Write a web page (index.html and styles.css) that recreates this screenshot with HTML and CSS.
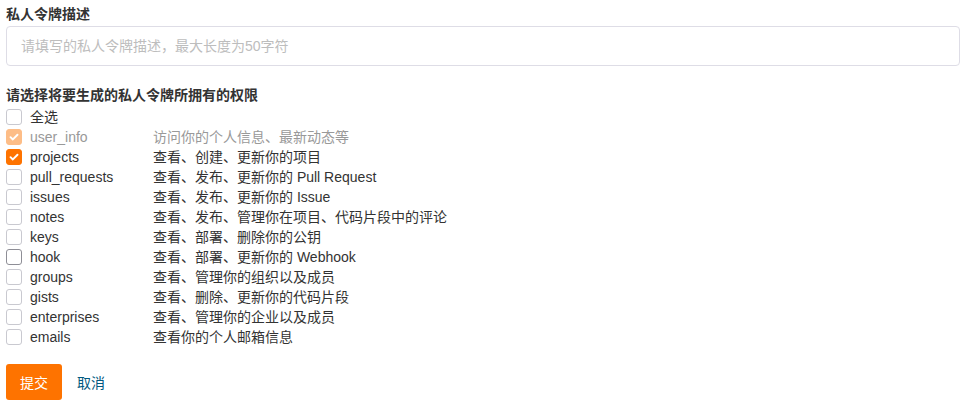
FILE: index.html
```html
<!DOCTYPE html>
<html lang="zh-CN">
<head>
    <meta charset="UTF-8">
    <title>私人令牌</title>
    <link rel="stylesheet" href="styles.css">
</head>
<body>
    <form class="token-form">
        <div class="field-title">私人令牌描述</div>
        <input class="desc-input" type="text" placeholder="请填写的私人令牌描述，最大长度为50字符">

        <div class="field-title scope-title">请选择将要生成的私人令牌所拥有的权限</div>
        <div class="scope-list">
            <div class="scope-row">
                <span class="box"></span>
                <span class="scope-name">全选</span>
            </div>
            <div class="scope-row disabled">
                <span class="box checked"><svg viewBox="0 0 16 16"><path d="M4 8.2l2.7 2.6L12 5.4" /></svg></span>
                <span class="scope-name">user_info</span>
                <span class="scope-desc">访问你的个人信息、最新动态等</span>
            </div>
            <div class="scope-row">
                <span class="box checked"><svg viewBox="0 0 16 16"><path d="M4 8.2l2.7 2.6L12 5.4" /></svg></span>
                <span class="scope-name">projects</span>
                <span class="scope-desc">查看、创建、更新你的项目</span>
            </div>
            <div class="scope-row">
                <span class="box"></span>
                <span class="scope-name">pull_requests</span>
                <span class="scope-desc">查看、发布、更新你的 Pull Request</span>
            </div>
            <div class="scope-row">
                <span class="box"></span>
                <span class="scope-name">issues</span>
                <span class="scope-desc">查看、发布、更新你的 Issue</span>
            </div>
            <div class="scope-row">
                <span class="box"></span>
                <span class="scope-name">notes</span>
                <span class="scope-desc">查看、发布、管理你在项目、代码片段中的评论</span>
            </div>
            <div class="scope-row">
                <span class="box"></span>
                <span class="scope-name">keys</span>
                <span class="scope-desc">查看、部署、删除你的公钥</span>
            </div>
            <div class="scope-row">
                <span class="box hover"></span>
                <span class="scope-name">hook</span>
                <span class="scope-desc">查看、部署、更新你的 Webhook</span>
            </div>
            <div class="scope-row">
                <span class="box"></span>
                <span class="scope-name">groups</span>
                <span class="scope-desc">查看、管理你的组织以及成员</span>
            </div>
            <div class="scope-row">
                <span class="box"></span>
                <span class="scope-name">gists</span>
                <span class="scope-desc">查看、删除、更新你的代码片段</span>
            </div>
            <div class="scope-row">
                <span class="box"></span>
                <span class="scope-name">enterprises</span>
                <span class="scope-desc">查看、管理你的企业以及成员</span>
            </div>
            <div class="scope-row">
                <span class="box"></span>
                <span class="scope-name">emails</span>
                <span class="scope-desc">查看你的个人邮箱信息</span>
            </div>
        </div>

        <div class="actions">
            <button class="submit-btn" type="button">提交</button>
            <a class="cancel-link" href="#">取消</a>
        </div>
    </form>
</body>
</html>
```

FILE: styles.css
```css
body {
    margin: 0;
    padding: 4px 6px;
    font-family: "Liberation Sans", "Noto Sans CJK SC", sans-serif;
    font-size: 14px;
    color: #333;
    background-color: #fff;
}
.token-form {
    width: 954px;
}
.field-title {
    font-weight: bold;
    line-height: 20px;
    color: #333;
    margin-bottom: 2px;
}
.desc-input {
    display: block;
    box-sizing: border-box;
    width: 100%;
    height: 40px;
    padding: 0 14px;
    border: 1px solid #dedde6;
    border-radius: 4px;
    font-family: inherit;
    font-size: 14px;
    color: #333;
    outline: none;
}
.desc-input::placeholder {
    color: #bdbdbd;
}
.scope-title {
    margin-top: 19px;
}
.scope-list {
    display: flex;
    flex-direction: column;
}
.scope-row {
    display: flex;
    align-items: center;
    height: 20px;
    line-height: 20px;
}
.box {
    box-sizing: border-box;
    width: 16px;
    height: 16px;
    border: 1px solid #c9c9d0;
    border-radius: 3px;
    background-color: #fff;
    flex-shrink: 0;
}
.box.hover {
    border-color: #8e8e96;
}
.box.checked {
    border-color: #fe7300;
    background-color: #fe7300;
}
.box svg {
    display: block;
    width: 14px;
    height: 14px;
    fill: none;
    stroke: #fff;
    stroke-width: 2.2;
    stroke-linecap: round;
    stroke-linejoin: round;
}
.scope-name {
    width: 123px;
    margin-left: 8px;
}
.disabled .box.checked {
    border-color: #fdbd87;
    background-color: #fdbd87;
}
.disabled .scope-name,
.disabled .scope-desc {
    color: #999;
}
.actions {
    display: flex;
    align-items: center;
    margin-top: 17px;
}
.submit-btn {
    width: 56px;
    height: 36px;
    border: none;
    border-radius: 3px;
    background-color: #fe7300;
    color: #fff;
    font-family: inherit;
    font-size: 14px;
    cursor: pointer;
}
.cancel-link {
    margin-left: 15px;
    color: #005980;
    text-decoration: none;
}
```
